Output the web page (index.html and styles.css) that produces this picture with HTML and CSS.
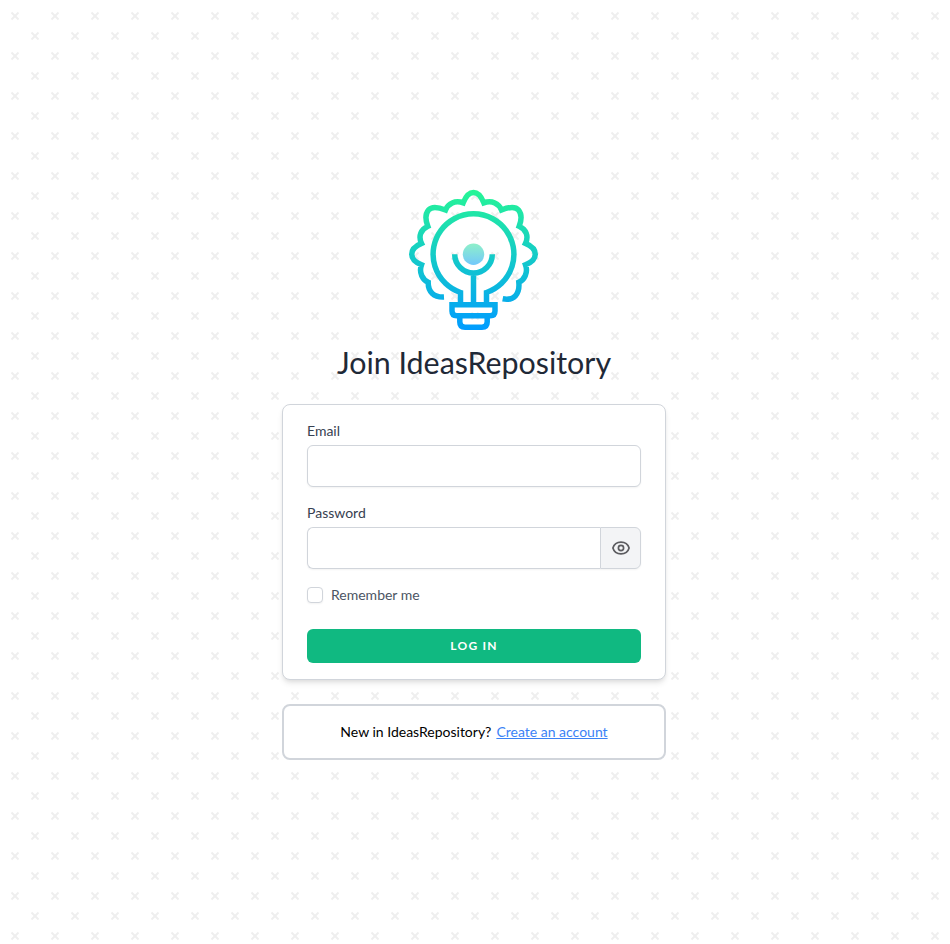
FILE: index.html
```html
<!DOCTYPE html>
<html lang="en">
<head>
<meta charset="utf-8">
<title>Join IdeasRepository</title>
<link rel="stylesheet" href="styles.css">
</head>
<body>
<main class="page">
  <svg class="logo" viewBox="400 180 148 152" fill="none" stroke="url(#brand)" stroke-width="5.5" aria-hidden="true">
    <defs>
      <linearGradient id="brand" gradientUnits="userSpaceOnUse" x1="0" y1="190" x2="0" y2="330">
        <stop offset="0" stop-color="#26f596"/>
        <stop offset="1" stop-color="#009cff"/>
      </linearGradient>
      <linearGradient id="dot" gradientUnits="userSpaceOnUse" x1="0" y1="243" x2="0" y2="265">
        <stop offset="0" stop-color="#8ff1c8"/>
        <stop offset="1" stop-color="#72c8fb"/>
      </linearGradient>
    </defs>
    <path d="M444 297C434 297.500 428 292 428.200 282.300C423 280 418.500 273 421.500 264.800C408.500 259.500 408.500 249 421.500 243.400C418 236 421 229.500 427.800 226.300C425 219 426 213 428.500 210C431.500 206.500 438 207 445.500 210C448 203.500 455 200 463.200 202.800C466 196 469 192.600 473.500 192.600C478 192.600 481 196 483.800 202.800C492 200 499 203.500 501.500 210C509 207 515.500 206.500 518.500 210C521 213 522 219 519.200 226.300C526 229.500 529 236 525.500 243.400C538.500 249 538.500 259.500 525.500 264.800C528.500 273 524 280 518.800 282.300C520 294 514 301 502.700 298.800"/>
    <path d="M460.500 303V292.500A40.400 40.400 0 1 1 486.500 292.500V303"/>
    <path d="M454.700 254.200A18.800 18.800 0 0 0 492.300 254.200M473.500 272V304"/>
    <path d="M452 304.800H495V311Q495 315.700 490.300 315.700H456.700Q452 315.700 452 311Z"/>
    <path d="M459.800 316V322Q459.800 327.200 465 327.200H482Q487.200 327.200 487.200 322V316"/>
    <circle cx="473.500" cy="254.200" r="10.700" fill="url(#dot)" stroke="none"/>
  </svg>
  <h1 class="title">Join IdeasRepository</h1>
  <form class="card">
    <label class="label" for="email">Email</label>
    <input class="field" id="email" type="email">
    <label class="label" for="password">Password</label>
    <div class="password">
      <input class="field" id="password" type="password">
      <button class="reveal" type="button" aria-label="Show password">
        <svg width="20" height="20" viewBox="0 0 20 20" fill="none" stroke="#5c5c60" stroke-width="1.700">
          <path d="M1.900 10C3 6.200 6.300 4.100 10 4.100S17 6.200 18.100 10C17 13.800 13.700 15.900 10 15.900S3 13.800 1.900 10Z"/>
          <circle cx="10" cy="10" r="2.600"/>
        </svg>
      </button>
    </div>
    <label class="remember"><input class="check" type="checkbox">Remember me</label>
    <button class="submit" type="button">LOG IN</button>
  </form>
  <div class="signup">New in IdeasRepository?<a class="link" href="#">Create an account</a></div>
</main>
</body>
</html>
```
FILE: styles.css
```css
* { box-sizing: border-box; }
body {
  margin: 0;
  font: 14px/20px Lato, sans-serif;
  color: #000;
  background: #fff url("data:image/svg+xml,%3Csvg xmlns='http://www.w3.org/2000/svg' width='40' height='40'%3E%3Cpath d='M15 14.590l2.830-2.830 1.410 1.410L16.410 16l2.830 2.830-1.410 1.410L15 17.410l-2.830 2.830-1.410-1.410L13.590 16l-2.830-2.830 1.410-1.410zM35 34.590l2.830-2.830 1.410 1.410L36.410 36l2.830 2.830-1.410 1.410L35 37.410l-2.830 2.830-1.410-1.410L33.590 36l-2.830-2.830 1.410-1.410z' fill='%23efefef'/%3E%3C/svg%3E");
}
.page {
  display: flex;
  flex-direction: column;
  align-items: center;
  width: 948px;
  height: 944px;
  padding-top: 180px;
}
.logo { display: block; width: 148px; height: 152px; flex: none; }
.title {
  margin: 12px 0 24px;
  font-size: 30.400px;
  line-height: 36px;
  font-weight: 400;
  color: #1f2937;
}
.card {
  display: flex;
  flex-direction: column;
  width: 384px;
  height: 276px;
  padding: 16px 24px 15px;
  background: #fff;
  border: 1px solid #d1d5db;
  border-radius: 8px;
  box-shadow: 0 4px 6px -1px rgba(0, 0, 0, .1), 0 2px 4px -1px rgba(0, 0, 0, .06);
}
.label { margin-bottom: 4px; color: #374151; }
.field {
  width: 100%;
  height: 42px;
  margin: 0 0 16px;
  padding: 8px 12px;
  font: 16px/24px Lato, sans-serif;
  background: #fff;
  border: 1px solid #d1d5db;
  border-radius: 6px;
  box-shadow: 0 1px 2px rgba(0, 0, 0, .05);
}
.password {
  display: flex;
  height: 42px;
  border-radius: 6px;
  box-shadow: 0 1px 2px rgba(0, 0, 0, .05);
}
.password .field {
  flex: 1;
  min-width: 0;
  margin: 0;
  border-right: 0;
  border-radius: 6px 0 0 6px;
  box-shadow: none;
}
.reveal {
  display: flex;
  align-items: center;
  justify-content: center;
  width: 41px;
  padding: 0;
  background: #f3f4f6;
  border: 1px solid #d1d5db;
  border-radius: 0 6px 6px 0;
}
.remember {
  display: flex;
  align-items: center;
  gap: 8px;
  height: 20px;
  margin: 16px 0 24px;
  color: #4b5563;
}
.check {
  appearance: none;
  width: 16px;
  height: 16px;
  margin: 0;
  background: #fff;
  border: 1px solid #d1d5db;
  border-radius: 4px;
  box-shadow: 0 1px 2px rgba(0, 0, 0, .05);
}
.submit {
  height: 34px;
  padding: 0;
  font: 700 12px/16px Lato, sans-serif;
  letter-spacing: 1.2px;
  color: #fff;
  background: #10b981;
  border: 0;
  border-radius: 6px;
}
.signup {
  display: flex;
  align-items: center;
  justify-content: center;
  gap: 5px;
  width: 384px;
  height: 56px;
  margin-top: 24px;
  background: #fff;
  border: 2px solid #d1d5db;
  border-radius: 8px;
}
.link { color: #3b82f6; text-decoration: underline; }
```
